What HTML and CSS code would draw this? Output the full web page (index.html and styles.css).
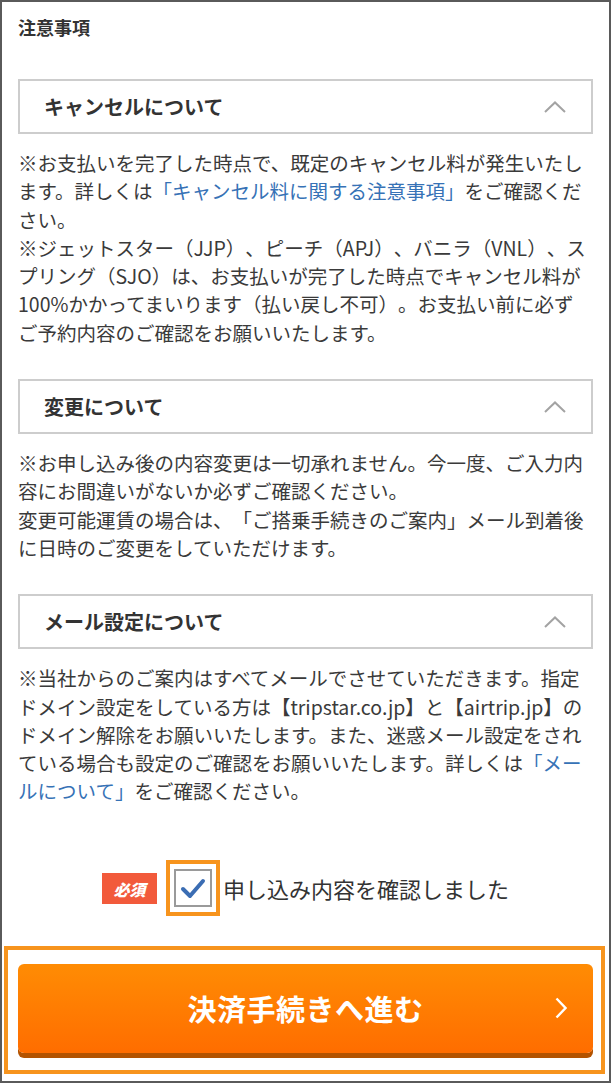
FILE: index.html
```html
<!DOCTYPE html>
<html lang="ja">
<head>
<meta charset="utf-8">
<title>注意事項</title>
<link rel="stylesheet" href="styles.css">
</head>
<body>
<div class="frame">
  <div class="content">
    <h2 class="heading">注意事項</h2>

    <div class="acc">
      <span class="acc-title">キャンセルについて</span>
      <svg class="acc-icon" width="22" height="12" viewBox="0 0 22 12"><polyline points="1,11 11,1.5 21,11" fill="none" stroke="#a3a3a3" stroke-width="2"/></svg>
    </div>
    <p class="note">※お支払いを完了した時点で、既定のキャンセル料が発生いたし<br>ます。詳しくは<a class="link" href="#">「キャンセル料に関する注意事項」</a>をご確認くだ<br>さい。<br>※ジェットスター（JJP）、ピーチ（APJ）、バニラ（VNL）、ス<br>プリング（SJO）は、お支払いが完了した時点でキャンセル料が<br>100%かかってまいります（払い戻し不可）。お支払い前に必ず<br>ご予約内容のご確認をお願いいたします。</p>

    <div class="acc">
      <span class="acc-title">変更について</span>
      <svg class="acc-icon" width="22" height="12" viewBox="0 0 22 12"><polyline points="1,11 11,1.5 21,11" fill="none" stroke="#a3a3a3" stroke-width="2"/></svg>
    </div>
    <p class="note">※お申し込み後の内容変更は一切承れません。今一度、ご入力内<br>容にお間違いがないか必ずご確認ください。<br>変更可能運賃の場合は、「ご搭乗手続きのご案内」メール到着後<br>に日時のご変更をしていただけます。</p>

    <div class="acc">
      <span class="acc-title">メール設定について</span>
      <svg class="acc-icon" width="22" height="12" viewBox="0 0 22 12"><polyline points="1,11 11,1.5 21,11" fill="none" stroke="#a3a3a3" stroke-width="2"/></svg>
    </div>
    <p class="note">※当社からのご案内はすべてメールでさせていただきます。指定<br>ドメイン設定をしている方は【tripstar.co.jp】と【airtrip.jp】の<br>ドメイン解除をお願いいたします。また、迷惑メール設定をされ<br>ている場合も設定のご確認をお願いいたします。詳しくは<a class="link" href="#">「メー<br>ルについて」</a>をご確認ください。</p>

    <div class="confirm">
      <span class="badge">必須</span>
      <span class="check-hl">
        <span class="checkbox">
          <svg width="34" height="34" viewBox="0 0 34 34"><path d="M7 18 L14 25 L27 10" fill="none" stroke="#3b6db3" stroke-width="4" stroke-linecap="round" stroke-linejoin="round"/></svg>
        </span>
      </span>
      <span class="confirm-label">申し込み内容を確認しました</span>
    </div>
  </div>

  <div class="cta-hl">
    <a class="cta" href="#">
      <span></span>
      <span class="cta-text">決済手続きへ進む</span>
      <svg class="cta-icon" width="12" height="22" viewBox="0 0 12 22"><polyline points="1.5,1.5 10.5,11 1.5,20.5" fill="none" stroke="#fff" stroke-width="2.4"/></svg>
    </a>
  </div>
</div>
</body>
</html>
```

FILE: styles.css
```css
html, body {
  margin: 0;
  padding: 0;
  background: #fff;
}

body {
  font-family: "Noto Sans CJK JP", "Noto Sans", sans-serif;
  color: #333;
}

.frame {
  box-sizing: border-box;
  width: 611px;
  height: 1083px;
  border: 2px solid #5a5a5a;
  background: #fff;
}

.content {
  padding: 12px 16px 0;
}

.heading {
  margin: 0;
  font-size: 18px;
  line-height: 26px;
  font-weight: 700;
  color: #333;
}

.acc {
  box-sizing: border-box;
  height: 55px;
  margin-top: 39px;
  border: 2px solid #cdcdcd;
  padding: 0 25px 0 24px;
  display: flex;
  align-items: center;
  justify-content: space-between;
}

.note + .acc {
  margin-top: 32px;
}

.acc-title {
  font-size: 20px;
  font-weight: 700;
  line-height: 29px;
  color: #333;
}

.acc-icon {
  display: block;
}

.note {
  margin: 15px 0 0;
  font-size: 19.5px;
  line-height: 28.3px;
  color: #3a3a3a;
  text-spacing-trim: space-all;
  white-space: nowrap;
}

.link {
  color: #3672b6;
  text-decoration: none;
}

.confirm {
  margin-top: 54px;
  display: flex;
  align-items: center;
  justify-content: center;
}

.badge {
  width: 55px;
  height: 31px;
  background: #f25a3b;
  color: #fff;
  font-size: 16px;
  font-weight: 900;
  font-style: italic;
  display: flex;
  align-items: center;
  justify-content: center;
  margin-right: 9px;
  margin-top: 2px;
}

.check-hl {
  border: 4px solid #f7941d;
  padding: 5px 4px;
  display: flex;
}

.checkbox {
  box-sizing: border-box;
  width: 38px;
  height: 38px;
  border: 2px solid #9a9a9a;
  background: #fff;
  display: flex;
  align-items: center;
  justify-content: center;
}

.checkbox svg {
  display: block;
}

.confirm-label {
  margin-left: 3px;
  font-size: 22px;
  line-height: 32px;
  color: #333;
}

.cta-hl {
  margin: 30px 4px 0 2px;
  border: 4px solid #f7941d;
  padding: 14px 8px 17px 10px;
}

.cta {
  height: 89px;
  border-radius: 6px;
  background: linear-gradient(#ff8c04, #ff6d00);
  box-shadow: 0 5px 0 #b35300;
  display: grid;
  grid-template-columns: 1fr auto 1fr;
  align-items: center;
  text-decoration: none;
}

.cta-text {
  color: #fff;
  font-size: 29px;
  font-weight: 700;
  line-height: 40px;
  letter-spacing: 0.5px;
}

.cta-icon {
  justify-self: end;
  margin-right: 26px;
  display: block;
}
```
